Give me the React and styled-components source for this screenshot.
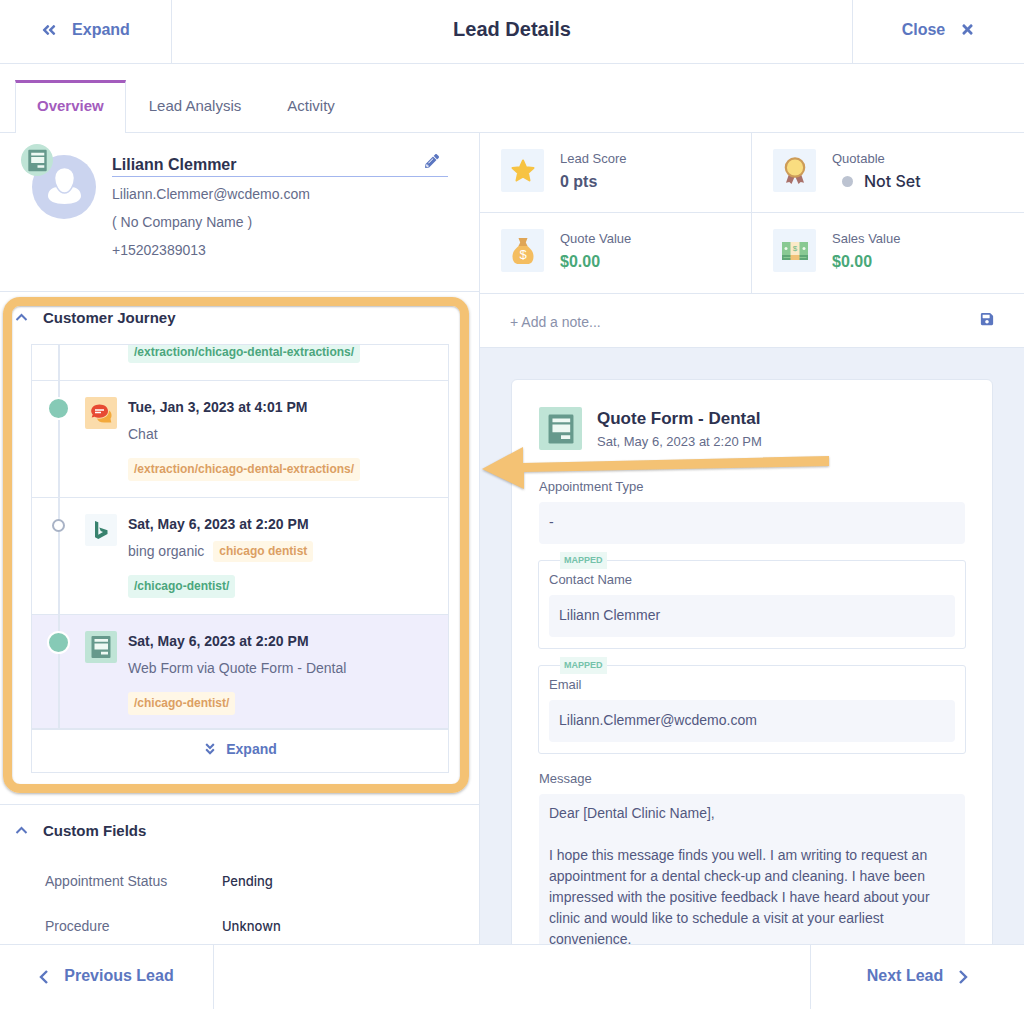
import React from 'react';
import styled, { createGlobalStyle, css } from 'styled-components';
import {
  FaAngleDoubleLeft,
  FaAngleDoubleDown,
  FaTimes,
  FaPencilAlt,
  FaSave,
} from 'react-icons/fa';

const line = '#e0e7f2';
const ink = '#2d3250';
const slate = '#646b8a';
const blue = '#5b76c0';

const GlobalStyle = createGlobalStyle`
  * {
    box-sizing: border-box;
  }
  body {
    margin: 0;
    background: #fff;
    color: ${slate};
    font-family: "Liberation Sans", Arial, sans-serif;
    font-size: 14px;
    line-height: 21px;
  }
  h1, h2, h3, p, dl, dd, ol {
    margin: 0;
    padding: 0;
  }
  button, input, textarea {
    font: inherit;
    color: inherit;
    background: none;
    border: 0;
    padding: 0;
    margin: 0;
  }
  button {
    cursor: pointer;
  }
  svg {
    display: block;
    flex: none;
  }
`;

const mediumText = css`
  font-family: Inter, "Liberation Sans", sans-serif;
  font-weight: 500;
`;

const Page = styled.div`
  display: flex;
  flex-direction: column;
  height: 100vh;
  overflow: hidden;
`;

const Bar = styled.div`
  display: flex;
  flex: none;
  justify-content: space-between;
  height: 64px;
  border-bottom: 1px solid ${line};
`;

const BottomBar = styled(Bar)`
  height: 65px;
  border-bottom: 0;
  border-top: 1px solid ${line};
`;

const BarButton = styled.button`
  display: flex;
  align-items: center;
  justify-content: center;
  gap: 15px;
  width: ${(props) => (props.$wide ? '214px' : '172px')};
  padding-bottom: ${(props) => (props.$wide ? '3px' : '4px')};
  color: ${blue};
  font-size: 16px;
  font-weight: 700;
  border: 0 solid ${line};
  border-${(props) => props.$edge}-width: 1px;
`;

const Title = styled.h1`
  align-self: center;
  padding-bottom: 6px;
  color: ${ink};
  font-size: 20px;
  font-weight: 700;
  line-height: 28px;
`;

const Tabs = styled.div`
  display: flex;
  flex: none;
  padding: 16px 15px 0;
  border-bottom: 1px solid ${line};
`;

const Tab = styled.button`
  height: 52px;
  padding: 0 23px 4px;
  color: ${slate};
  font-size: 15px;
  border-top: 3px solid transparent;
  ${(props) => props.$active && css`
    margin-bottom: -1px;
    height: 53px;
    padding: 0 21px 5px;
    color: #a35cbd;
    font-weight: 700;
    background: #fff;
    border: 1px solid ${line};
    border-top: 3px solid #a35cbd;
    border-bottom: 0;
  `}
`;

const Body = styled.main`
  position: relative;
  display: grid;
  grid-template-columns: 15fr 17fr;
  flex: 1;
  min-height: 0;
  overflow: hidden;
`;

const Side = styled.div`
  min-width: 0;
  border-right: 1px solid ${line};
`;

const Profile = styled.section`
  display: flex;
  gap: 16px;
  height: 159px;
  padding: 22px 31px 0 32px;
  border-bottom: 1px solid ${line};
`;

const Avatar = styled.div`
  position: relative;
  flex: none;
  width: 64px;
`;

const AvatarBadge = styled.span`
  position: absolute;
  top: -11px;
  left: -11px;
  display: flex;
  align-items: center;
  justify-content: center;
  width: 32px;
  height: 32px;
  border-radius: 50%;
  background: #bfe4d6;
`;

const Contact = styled.div`
  flex: 1;
  min-width: 0;
  p {
    margin-bottom: 7px;
  }
`;

const NameRow = styled.div`
  display: flex;
  justify-content: space-between;
  height: 22px;
  margin-bottom: 7px;
  border-bottom: 1px solid #a3b6ee;
  h2 {
    color: ${ink};
    font-size: 16px;
    font-weight: 700;
    line-height: 19px;
  }
`;

const IconButton = styled.button`
  display: flex;
  color: ${blue};
`;

const PencilButton = styled(IconButton)`
  align-self: flex-start;
  margin-right: 9px;
  margin-top: -1px;
`;

const Section = styled.section`
  position: relative;
  border-bottom: 1px solid ${line};
`;

const SectionHead = styled.button`
  display: flex;
  align-items: center;
  gap: 15px;
  width: 100%;
  height: 52px;
  padding: 0 0 2px 15px;
  color: ${ink};
  font-size: 15px;
  font-weight: 700;
  svg {
    color: ${blue};
  }
`;

// callout ring drawn over the journey panel
const Highlight = styled.div`
  position: absolute;
  inset: 5px 10px 11px 3px;
  border: 9px solid #f4c274;
  border-radius: 17px;
  box-shadow: 0 1px 3px rgba(60, 60, 60, 0.4), inset 0 1px 2px rgba(60, 60, 60, 0.35);
  pointer-events: none;
`;

const Journey = styled.div`
  margin: 0 30px 31px 31px;
  border: 1px solid ${line};
`;

const Timeline = styled.ol`
  display: flex;
  flex-direction: column;
  justify-content: flex-end;
  height: 385px;
  overflow: hidden;
  list-style: none;
`;

const Entry = styled.li`
  display: flex;
  flex: none;
  height: 117px;
  padding-top: 16px;
  border-bottom: 1px solid ${line};
  background: ${(props) => (props.$selected ? '#efeefc' : 'transparent')};
  &:last-child {
    height: 115px;
    border-bottom: 2px solid ${line};
  }
`;

const Rail = styled.div`
  display: flex;
  justify-content: center;
  width: 53px;
  margin-top: -16px;
  padding-top: 16px;
  background: linear-gradient(${line}, ${line}) 26px 0 / 2px 100% no-repeat;
`;

const Dot = styled.span`
  width: 23px;
  height: 23px;
  border: 2px solid #fff;
  border-radius: 50%;
  background: #86cab6;
  ${(props) => props.$hollow && css`
    width: 13px;
    height: 13px;
    margin-top: 5px;
    border-color: #a9b3c6;
    background: #fff;
  `}
`;

const Tile = styled.span`
  display: flex;
  flex: none;
  align-items: center;
  justify-content: center;
  width: ${(props) => props.$size}px;
  height: ${(props) => props.$size}px;
  border-radius: 2px;
  background: ${(props) => props.$tone};
`;

const EntryText = styled.div`
  margin-left: 11px;
  h3 {
    color: ${ink};
    font-size: 14px;
    font-weight: 700;
  }
`;

const Source = styled.p`
  display: flex;
  gap: 9px;
  margin: 6px 0 13px;
`;

const Tag = styled.span`
  display: inline-block;
  padding: 0 6px;
  font-size: 12px;
  font-weight: 700;
  line-height: ${(props) => (props.$short ? '21px' : '23px')};
  border-radius: 3px;
  color: ${(props) => (props.$green ? '#4ba67d' : '#dc9f63')};
  background: ${(props) => (props.$green ? '#e4f7f1' : '#fff7e6')};
`;

const UrlLink = styled(Tag).attrs({ as: 'a' })`
  text-decoration: none;
`;

const ExpandButton = styled.button`
  display: flex;
  align-items: center;
  justify-content: center;
  gap: 9px;
  width: 100%;
  height: 42px;
  padding-bottom: 4px;
  color: ${blue};
  font-weight: 700;
`;

const Fields = styled.dl`
  display: grid;
  grid-template-columns: 177px 1fr;
  row-gap: 24px;
  padding: 14px 31px 31px 45px;
  dd {
    ${mediumText}
    color: ${ink};
    font-size: 13px;
  }
`;

const Detail = styled.div`
  display: flex;
  flex-direction: column;
  min-width: 0;
  min-height: 0;
`;

const Stats = styled.div`
  display: grid;
  grid-template-columns: 1fr 1fr;
  flex: none;
`;

const Stat = styled.div`
  display: flex;
  gap: 16px;
  height: 80px;
  padding: 16px 21px;
  border-bottom: 1px solid ${line};
  &:nth-child(odd) {
    border-right: 1px solid ${line};
  }
  &:nth-child(n + 3) {
    height: 81px;
  }
`;

const StatLabel = styled.div`
  font-size: 13px;
  line-height: 20px;
`;

const StatValue = styled.div`
  display: flex;
  align-items: center;
  gap: 11px;
  color: ${(props) => props.$tone};
  font-size: 16px;
  font-weight: 700;
  line-height: 25px;
  ${(props) => props.$soft && mediumText}
`;

const StatusDot = styled.i`
  width: 11px;
  height: 11px;
  margin-left: 10px;
  border-radius: 50%;
  background: #bcc3d1;
`;

const NoteRow = styled.div`
  display: flex;
  flex: none;
  align-items: center;
  height: 54px;
  padding: 0 30px;
  border-bottom: 1px solid ${line};
  input {
    flex: 1;
    min-width: 0;
    padding-top: 3px;
    outline: 0;
    &::placeholder {
      color: #8a91ab;
      opacity: 1;
    }
  }
`;

const SaveButton = styled(IconButton)`
  padding-bottom: 3px;
`;

const Canvas = styled.div`
  flex: 1;
  min-height: 0;
  padding: 31px 31px 0;
  overflow: hidden;
  background: #ebf0f9;
`;

const Card = styled.form`
  display: flex;
  flex-direction: column;
  padding: 27px;
  border: 1px solid ${line};
  border-radius: 6px;
  background: #fff;
`;

const CardHead = styled.div`
  display: flex;
  gap: 15px;
  margin-bottom: 25px;
  h2 {
    color: ${ink};
    font-size: 17px;
    font-weight: 700;
    line-height: 24px;
  }
  p {
    font-size: 13px;
  }
`;

const Label = styled.label`
  display: block;
  margin-bottom: 5px;
  font-size: 13px;
  line-height: 20px;
`;

const fieldBox = css`
  display: block;
  width: 100%;
  padding: 0 10px;
  color: #525880;
  border-radius: 4px;
  background: #f4f6fb;
  outline: 0;
`;

const Input = styled.input`
  ${fieldBox}
  height: 42px;
  padding-bottom: 3px;
`;

const Message = styled.textarea`
  ${fieldBox}
  height: 240px;
  padding-top: 9px;
  resize: none;
  overflow: hidden;
`;

const Mapped = styled.div`
  position: relative;
  margin: 16px -1px 0;
  padding: 9px 10px 11px;
  border: 1px solid ${line};
  border-radius: 3px;
`;

const MappedBadge = styled.span`
  position: absolute;
  top: -9px;
  left: 21px;
  padding: 0 4px;
  color: #74c2aa;
  font-size: 9px;
  font-weight: 700;
  line-height: 17px;
  background: #ebf8f4;
`;

const MessageGroup = styled.div`
  margin-top: 15px;
`;

const Arrow = styled.svg`
  position: absolute;
  top: 310px;
  left: 47%;
  filter: drop-shadow(0 1px 1px rgba(60, 60, 60, 0.35));
  pointer-events: none;
`;

const SmallChevron = () => (
  <svg width="13" height="13" viewBox="0 0 13 13">
    <path d="M1.500 9l5-5 5 5" fill="none" stroke="currentColor" strokeWidth="2" />
  </svg>
);

const SideChevron = ({ next }) => (
  <svg width="10" height="16" viewBox="0 0 10 16">
    <path
      d={next ? 'M2 3l6 6-6 6' : 'M8 3L2 9l6 6'}
      fill="none"
      stroke="currentColor"
      strokeWidth="2.400"
    />
  </svg>
);

const FormIcon = ({ size }) => (
  <svg width={size} height={size} viewBox="0 0 32 32">
    <path fill="#66998c" d="M7.500 5h17q1 0 1 1v20q0 1-1 1h-17q-1 0-1-1V6q0-1 1-1z" />
    <path fill="#eef9f3" d="M9.500 8H23v2.800H9.500zM9.500 12.500H23v6H9.500zM16 20.800h7v2.800h-7z" />
  </svg>
);

const PersonIcon = () => (
  <svg width="64" height="64" viewBox="0 0 64 64">
    <circle cx="32" cy="32" r="32" fill="#cbd4ef" />
    <path fill="#fff" d="M16 41c0-6 5-9 10-9 1 4 3 6 6 6s5-2 7-6c5 0 10 3 10 9 0 5-7 8-16.500 8S16 46 16 41z" />
    <path fill="#fff" stroke="#cbd4ef" strokeWidth="1.500" d="M32.500 12.500c6 0 10 4.500 10 10.500 0 7-4.500 15-10 15s-10-8-10-15c0-6 4-10.500 10-10.500z" />
  </svg>
);

const ChatIcon = () => (
  <svg width="32" height="32" viewBox="0 0 32 32">
    <path fill="#f3a93c" d="M12 21.500c7 1 12-2.500 12-8 2 1.200 2.500 3 2.500 5 0 1.500-.5 2.500-1 3.200l.8 3.800H19c-4 0-6-1.500-7-4z" />
    <path fill="#e74a33" d="M14.500 7.500c5 0 8.500 2.800 8.500 6.600s-3.500 6.700-8.500 6.700c-2 0-3.500-.4-4.800-1l-3 .8 1-3c-1-1-1.500-2.200-1.500-3.500 0-3.800 3.500-6.600 8.300-6.600z" />
    <path stroke="#fff" strokeWidth="1.300" d="M10 13h9M10 15.500h6" />
  </svg>
);

const BingIcon = () => (
  <svg width="32" height="32" viewBox="0 0 32 32">
    <path fill="#38826e" d="M10 7l3.300 1.200v12.500l4.700-2.600-2.300-1-1.400-3.700 8.200 2.900v3.800L13.300 25 10 23.200z" />
  </svg>
);

const StarIcon = () => (
  <svg width="24" height="24" viewBox="0 0 24 24">
    <path
      fill="#f7c343"
      stroke="#f7c343"
      strokeWidth="2"
      strokeLinejoin="round"
      d="M12 1.500l3 6.700 7.500.8-5.600 5 1.600 7.500-6.500-3.800-6.500 3.800L7.100 14 1.500 9l7.500-.8z"
    />
  </svg>
);

const MedalIcon = () => (
  <svg width="24" height="30" viewBox="0 0 24 30">
    <path fill="#a9716a" d="M6 18l6 2-3.500 8-2.200-2-3.300.800zM18 18l-6 2 3.500 8 2.200-2 3.300.800z" />
    <circle cx="12" cy="11.500" r="9.200" fill="#f9dd80" stroke="#cd9c58" strokeWidth="2.200" />
  </svg>
);

const BagIcon = () => (
  <svg width="24" height="28" viewBox="0 0 24 28">
    <path fill="#f4bd60" d="M9 8h6c4 3 7.500 6 7.500 11.500 0 5-2.500 7.500-6 7.500h-9c-3.500 0-6-2.500-6-7.500C1.500 14 5 11 9 8z" />
    <path fill="#dfa556" d="M7.500 1h9l-1.700 4.500L16.500 9h-9l1.700-3.500z" />
    <text x="12" y="22" textAnchor="middle" fontSize="13" fill="#fff">$</text>
  </svg>
);

const CashIcon = () => (
  <svg width="26" height="20" viewBox="0 0 26 20">
    <path fill="#88c993" d="M0 1h26v13H0z" />
    <path fill="#5fa777" d="M0 14h26v5H0z" />
    <path stroke="#88c993" d="M1.500 16.500h23" />
    <path fill="#fbeac8" d="M8.500 1h9v13h-9z" />
    <path fill="#f1c277" d="M8.500 14h9v5h-9z" />
    <circle cx="4" cy="7.500" r="1.500" fill="#eef8ee" />
    <circle cx="22" cy="7.500" r="1.500" fill="#eef8ee" />
    <text x="13" y="10" textAnchor="middle" fontSize="8" fill="#6fb886">$</text>
  </svg>
);

const entries = [
  {
    date: 'Tue, Jan 3, 2023 at 4:01 PM',
    source: 'Chat',
    url: '/extraction/chicago-dental-extractions/',
    icon: <ChatIcon />,
    tone: '#fbdcab',
  },
  {
    date: 'Sat, May 6, 2023 at 2:20 PM',
    source: 'bing organic',
    keyword: 'chicago dentist',
    url: '/chicago-dentist/',
    icon: <BingIcon />,
    tone: '#f3f8fb',
    visit: true,
  },
  {
    date: 'Sat, May 6, 2023 at 2:20 PM',
    source: 'Web Form via Quote Form - Dental',
    url: '/chicago-dentist/',
    icon: <FormIcon size={32} />,
    tone: '#bfe4d6',
    selected: true,
  },
];

const message = `Dear [Dental Clinic Name],

I hope this message finds you well. I am writing to request an appointment for a dental check-up and cleaning. I have been impressed with the positive feedback I have heard about your clinic and would like to schedule a visit at your earliest convenience.`;

// tail end of the entry above the visible ones
const TailEntry = styled(Entry)`
  height: 36px;
  padding-top: 0;
  ${Rail} {
    margin-top: 0;
  }
  ${EntryText} {
    display: flex;
    align-items: flex-start;
    margin-left: 43px;
  }
  ${Tag} {
    padding-bottom: 4px;
    line-height: 14px;
    border-radius: 0 0 3px 3px;
  }
`;

const JourneyEntry = ({ date, source, keyword, url, icon, tone, visit, selected }) => (
  <Entry $selected={selected}>
    <Rail><Dot $hollow={visit} /></Rail>
    <Tile $size={32} $tone={tone}>{icon}</Tile>
    <EntryText>
      <h3>{date}</h3>
      <Source>
        {source}
        {keyword && <Tag $short>{keyword}</Tag>}
      </Source>
      <UrlLink href="#" $green={visit}>{url}</UrlLink>
    </EntryText>
  </Entry>
);

const StatCard = ({ icon, label, tone, soft, children }) => (
  <Stat>
    <Tile $size={43} $tone="#edf4fc">{icon}</Tile>
    <div>
      <StatLabel>{label}</StatLabel>
      <StatValue $tone={tone} $soft={soft}>{children}</StatValue>
    </div>
  </Stat>
);

const MappedField = ({ id, label, value }) => (
  <Mapped>
    <MappedBadge>MAPPED</MappedBadge>
    <Label htmlFor={id}>{label}</Label>
    <Input id={id} defaultValue={value} />
  </Mapped>
);

const App = () => (
  <Page>
    <GlobalStyle />
    <Bar as="header">
      <BarButton $edge="right"><FaAngleDoubleLeft size={16} />Expand</BarButton>
      <Title>Lead Details</Title>
      <BarButton $edge="left">Close<FaTimes size={15} /></BarButton>
    </Bar>
    <Tabs role="tablist">
      <Tab role="tab" aria-selected="true" $active>Overview</Tab>
      <Tab role="tab">Lead Analysis</Tab>
      <Tab role="tab">Activity</Tab>
    </Tabs>
    <Body>
      <Side>
        <Profile>
          <Avatar>
            <PersonIcon />
            <AvatarBadge><FormIcon size={31} /></AvatarBadge>
          </Avatar>
          <Contact>
            <NameRow>
              <h2>Liliann Clemmer</h2>
              <PencilButton aria-label="Edit name"><FaPencilAlt size={14} /></PencilButton>
            </NameRow>
            <p>Liliann.Clemmer@wcdemo.com</p>
            <p>( No Company Name )</p>
            <p>+15202389013</p>
          </Contact>
        </Profile>
        <Section>
          <SectionHead aria-expanded="true"><SmallChevron />Customer Journey</SectionHead>
          <Journey>
            <Timeline>
              <TailEntry>
                <Rail />
                <EntryText>
                  <UrlLink href="#" $green>/extraction/chicago-dental-extractions/</UrlLink>
                </EntryText>
              </TailEntry>
              {entries.map((entry, i) => <JourneyEntry key={i} {...entry} />)}
            </Timeline>
            <ExpandButton><FaAngleDoubleDown size={14} />Expand</ExpandButton>
          </Journey>
          <Highlight />
        </Section>
        <Section>
          <SectionHead aria-expanded="true"><SmallChevron />Custom Fields</SectionHead>
          <Fields>
            <dt>Appointment Status</dt>
            <dd>Pending</dd>
            <dt>Procedure</dt>
            <dd>Unknown</dd>
          </Fields>
        </Section>
      </Side>
      <Detail>
        <Stats>
          <StatCard icon={<StarIcon />} label="Lead Score" tone="#4f5678">0 pts</StatCard>
          <StatCard icon={<MedalIcon />} label="Quotable" tone={ink} soft><StatusDot />Not Set</StatCard>
          <StatCard icon={<BagIcon />} label="Quote Value" tone="#48a878">$0.00</StatCard>
          <StatCard icon={<CashIcon />} label="Sales Value" tone="#48a878">$0.00</StatCard>
        </Stats>
        <NoteRow>
          <input aria-label="Note" placeholder="+ Add a note..." />
          <SaveButton aria-label="Save note"><FaSave size={14} /></SaveButton>
        </NoteRow>
        <Canvas>
          <Card>
            <CardHead>
              <Tile $size={43} $tone="#bfe4d6"><FormIcon size={42} /></Tile>
              <div>
                <h2>Quote Form - Dental</h2>
                <p>Sat, May 6, 2023 at 2:20 PM</p>
              </div>
            </CardHead>
            <Label htmlFor="appointment">Appointment Type</Label>
            <Input id="appointment" defaultValue="-" />
            <MappedField id="contact" label="Contact Name" value="Liliann Clemmer" />
            <MappedField id="email" label="Email" value="Liliann.Clemmer@wcdemo.com" />
            <MessageGroup>
              <Label htmlFor="message">Message</Label>
              <Message id="message" defaultValue={message} />
            </MessageGroup>
          </Card>
        </Canvas>
      </Detail>
      <Arrow width="350" height="50" viewBox="0 0 350 50">
        <path fill="#f4c274" d="M1 26L42 4v16L348 13v10L43 29v17z" />
      </Arrow>
    </Body>
    <BottomBar as="footer">
      <BarButton $edge="right" $wide><SideChevron />Previous Lead</BarButton>
      <BarButton $edge="left" $wide>Next Lead<SideChevron next /></BarButton>
    </BottomBar>
  </Page>
);

export default App;
